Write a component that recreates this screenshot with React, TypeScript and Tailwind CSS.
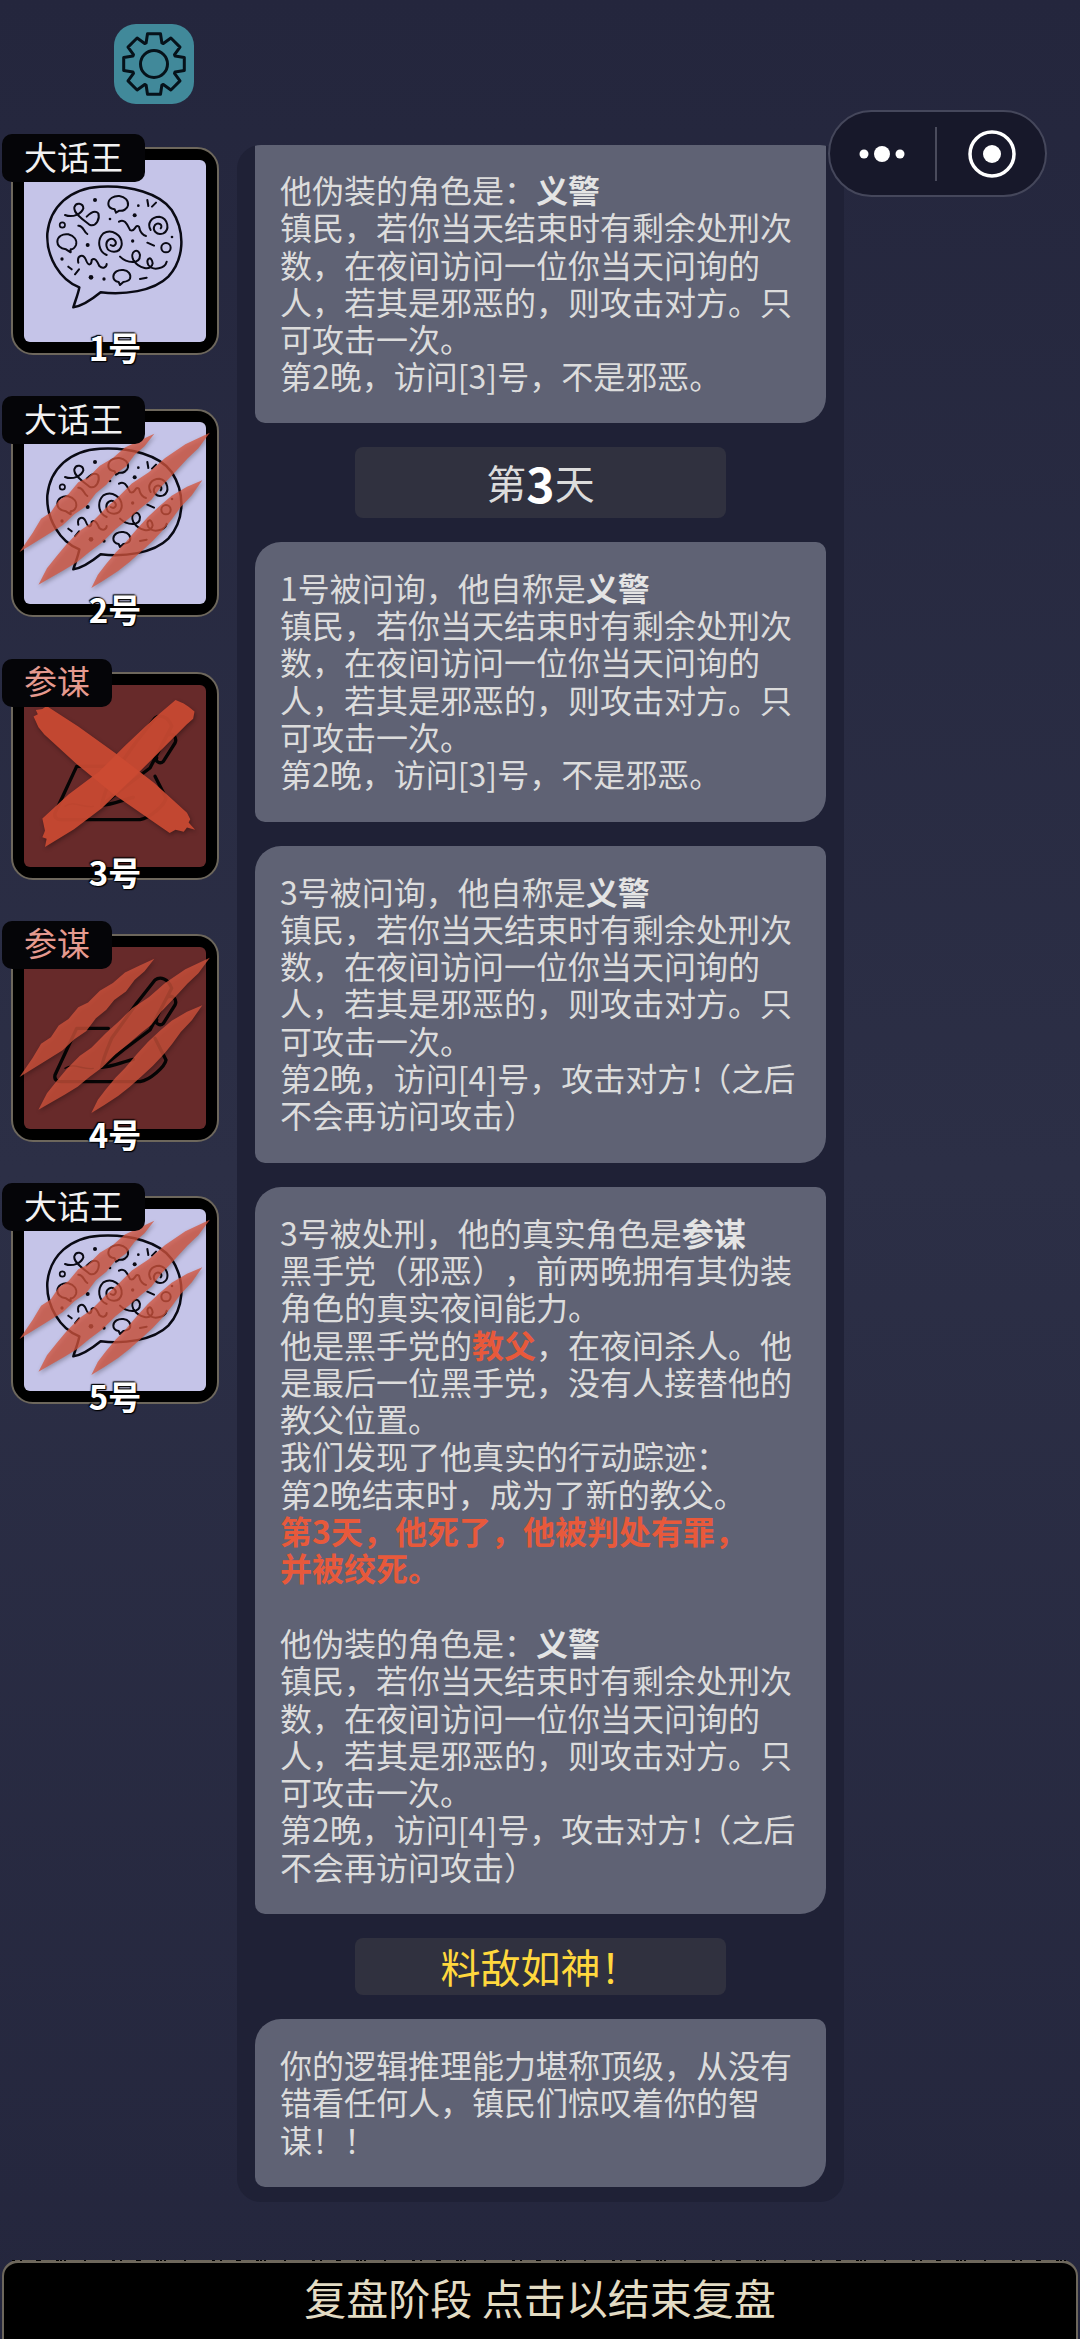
import React from 'react';

const FONT = 'font-["Noto_Sans_CJK_SC","Noto_Sans",sans-serif]';

const gearPath = () => {
  const cx = 40;
  const cy = 40;
  let d = '';
  for (let i = 0; i < 8; i++) {
    const a = (i * Math.PI) / 4 - Math.PI / 2;
    const pts = [
      [a - 0.36, 22.5],
      [a - 0.21, 31],
      [a + 0.21, 31],
      [a + 0.36, 22.5],
    ];
    pts.forEach(([t, r]) => {
      d += `${d ? 'L' : 'M'}${(cx + r * Math.cos(t)).toFixed(1)} ${(cy + r * Math.sin(t)).toFixed(1)} `;
    });
  }
  return d + 'Z';
};

// worn top edge of the bottom bar
const wornEdge = () => {
  let d = '';
  let seed = 7;
  for (let x = 4; x < 1072; x += 4) {
    seed = (seed * 31 + 11) % 101;
    if (seed % 3 === 0) d += `M${x} 0 h${2 + (seed % 4)} v${1 + (seed % 3)} h-${2 + (seed % 4)} Z `;
  }
  return d;
};

const BubbleIcon = () => (
  <svg viewBox="-48 -60 546 546" className="w-full h-full" fill="none" stroke="#0a0a14" strokeWidth="7.5" strokeLinecap="round" strokeLinejoin="round">
    <path d="M100 382 C130 378 160 355 182 337 C250 345 340 335 385 290 C430 240 440 160 395 90 C360 40 270 15 180 20 C90 25 30 80 22 160 C18 230 60 300 118 322 C115 340 105 365 100 382 Z" />
    <path d="M205 72 C205 55 222 47 238 48 C255 50 266 62 264 76 C262 88 248 94 238 92 L228 98 L224 88 C212 86 205 82 205 72Z" strokeWidth="6" />
    <path d="M52 185 C52 170 68 160 85 163 C102 168 112 180 108 195 C104 205 98 208 92 208 L92 217 L78 208 C62 205 52 198 52 185Z" strokeWidth="6" />
    <path d="M220 290 C220 276 235 268 250 270 C265 272 274 283 270 296 C266 304 258 305 250 306 L240 315 L236 306 C226 304 220 300 220 290Z" strokeWidth="6" />
    <circle cx="67" cy="135" r="8" strokeWidth="5" />
    <circle cx="378" cy="203" r="14" strokeWidth="6" />
    <g fill="#0a0a14" stroke="none">
      <circle cx="165" cy="60" r="6" />
      <circle cx="295" cy="77" r="4" />
      <circle cx="210" cy="117" r="4" />
      <circle cx="284" cy="106" r="6" />
      <circle cx="143" cy="195" r="6" />
      <circle cx="278" cy="183" r="5" />
      <circle cx="396" cy="171" r="4" />
      <circle cx="66" cy="237" r="5" />
      <circle cx="153" cy="292" r="7" />
      <circle cx="192" cy="297" r="5" />
    </g>
    <g strokeWidth="6">
      <path d="M322 60 L325 78 M336 80 L348 68 M85 260 L95 268 M105 283 L117 268 M322 188 L342 197 M300 297 L320 293" />
      <path d="M75 105 C100 115 125 100 130 85 C130 70 108 65 103 82 C100 100 130 120 150 135 C170 140 180 115 175 100 C165 90 150 100 140 110" />
      <path d="M115 137 C130 135 130 155 142 162" />
      <path d="M237 125 C255 115 262 135 270 150 C285 160 285 130 297 140 C300 155 305 165 318 168" />
      <path d="M332 150 C320 130 335 110 358 110 C385 115 390 150 370 160 C350 168 335 150 345 135 C355 125 370 135 362 145" />
      <path d="M200 225 C175 215 170 180 190 160 C215 145 248 165 245 195 C240 222 205 220 200 200 C195 180 215 170 225 182 C232 192 222 202 212 195" />
      <path d="M115 248 C110 225 130 220 138 240 C145 260 155 255 155 240 C165 230 172 245 178 258 C188 268 200 262 200 252" />
      <path d="M240 230 C260 250 300 255 300 225 C295 200 268 215 280 240 C295 265 335 275 338 250 C335 225 315 235 325 255 C340 275 375 265 380 245" />
    </g>
  </svg>
);

const PenIcon = () => (
  <svg viewBox="-48 -39 546 546" className="w-full h-full" fill="none" stroke="#050505" strokeWidth="10" strokeLinecap="round" strokeLinejoin="round">
    <path d="M205 205 L110 205 L45 345 C42 358 50 365 62 365 L300 365 C330 360 375 320 378 300 L345 235" />
    <path d="M290 130 L345 60 C360 48 385 55 395 85 L330 210 L250 270 L185 322 C190 290 205 260 215 235 L290 130" />
    <path d="M385 110 C400 105 412 120 405 135 L370 190 C360 200 345 190 350 180" />
    <path d="M185 322 C215 320 250 305 280 298" />
    <path d="M75 325 C100 305 130 332 160 325" strokeWidth="4" />
  </svg>
);

const Scratches = () => (
  <svg viewBox="32 88 625 625" className="absolute inset-0 w-full h-full drop-shadow-[1px_2px_2px_rgba(0,0,0,0.35)]" fill="#d4543c" fillOpacity="0.76">
    <path d="M52 520 L92 462 L118 418 L148 398 L172 362 L202 342 L232 306 L262 292 L298 256 L338 232 L375 200 L420 178 L465 158 L435 196 L405 222 L378 258 L342 284 L318 314 L286 340 L256 380 L220 404 L184 438 L130 472 Z" />
    <path d="M110 620 L136 570 L166 532 L196 496 L236 456 L272 430 L316 386 L356 350 L396 310 L448 276 L498 232 L560 190 L635 155 L600 202 L566 234 L526 278 L486 320 L456 360 L426 384 L386 418 L346 450 L306 490 L266 520 L230 550 L190 574 Z" />
    <path d="M272 630 L292 590 L316 558 L346 522 L376 492 L411 450 L446 412 L482 378 L518 348 L565 320 L612 300 L580 346 L546 382 L520 418 L496 448 L460 486 L426 518 L390 550 L354 578 L312 606 Z" />
  </svg>
);

const Cross = () => (
  <svg viewBox="32 65 625 625" className="absolute inset-0 w-full h-full drop-shadow-[1px_2px_2px_rgba(0,0,0,0.35)]" fill="#cb4a33" fillOpacity="0.93">
    <path d="M95 195 L108 188 L102 175 L122 172 L135 163 L232 226 L344 306 L464 398 L565 490 L575 510 L570 520 L590 542 L565 535 L555 548 L530 542 L512 552 L442 504 L336 430 L226 340 L128 250 L110 228 Z" />
    <path d="M122 508 L202 434 L296 364 L376 284 L466 199 L530 145 L555 155 L570 165 L588 180 L584 202 L564 220 L474 310 L394 390 L304 476 L219 541 L130 595 L135 570 L122 565 L130 545 Z" />
  </svg>
);

const players = [
  { no: '1号', role: '大话王', evil: false, mark: '' },
  { no: '2号', role: '大话王', evil: false, mark: 'scratch' },
  { no: '3号', role: '参谋', evil: true, mark: 'cross' },
  { no: '4号', role: '参谋', evil: true, mark: 'scratch' },
  { no: '5号', role: '大话王', evil: false, mark: 'scratch' },
];

const PlayerCard = ({ player }: { player: (typeof players)[number] }) => (
  <div className="relative w-[208px] h-[208px] rounded-[22px] border-2 border-[#6d675c] bg-black p-[11px]">
    <div className={`w-full h-full rounded-[6px] ${player.evil ? 'bg-[#672a2a]' : 'bg-[#c5c4e8]'}`}>
      {player.evil ? <PenIcon /> : <BubbleIcon />}
    </div>
    {player.mark === 'scratch' && <Scratches />}
    {player.mark === 'cross' && <Cross />}
    <div className={`absolute left-[-11px] top-[-15px] h-[48px] pb-[4px] px-[22px] rounded-[10px] bg-[#050508] flex items-center text-[33px] leading-none ${player.evil ? 'text-[#e59a8f]' : 'text-[#f2f2f2]'}`}>
      {player.role}
    </div>
    <div className="absolute left-0 right-0 top-[179px] text-center text-[33px] leading-[38px] font-bold text-white [text-shadow:0_0_2px_#000,0_0_2px_#000,1px_1px_1px_#000,-1px_-1px_1px_#000]">
      {player.no}
    </div>
  </div>
);

const Bold = ({ children }: { children: React.ReactNode }) => <span className="font-bold text-[#e4e4e4]">{children}</span>;
const Red = ({ children }: { children: React.ReactNode }) => <span className="font-bold text-[#e8593b]">{children}</span>;

const Bubble = ({ first, children }: { first?: boolean; children: React.ReactNode }) => (
  <div className={`bg-[#5f6274] px-[25px] text-[32px] leading-[37.3px] text-[#dcdcdc] [text-spacing-trim:space-all] rounded-bl-[10px] rounded-br-[26px] ${first ? 'pt-[26px] pb-[28px]' : 'pt-[27px] pb-[29px] rounded-tl-[26px] rounded-tr-[10px]'}`}>
    {children}
  </div>
);

const ABILITY = '镇民，若你当天结束时有剩余处刑次数，在夜间访问一位你当天问询的人，若其是邪恶的，则攻击对方。只可攻击一次。';

const Visit4 = () => (
  <>
    <span className="whitespace-nowrap">
      第2晚，访问[4]号，攻击对方！<span className="-ml-[22px]">（</span>之后
    </span>
    <br />
    不会再访问攻击）
  </>
);

export default function App() {
  return (
    <div className={`relative w-[1080px] h-[2339px] overflow-hidden bg-linear-to-b from-[#24263d] via-[#2c2f46] to-[#24263d] flex flex-col ${FONT}`}>
      <div className="h-[145px] pl-[114px] pt-[24px] shrink-0">
        <div className="w-[80px] h-[80px] rounded-[22px] bg-[#41899a]">
          <svg viewBox="0 0 80 80" className="w-full h-full" fill="none" stroke="#06121a" strokeWidth="3" strokeLinejoin="round">
            <path d={gearPath()} />
            <circle cx="40" cy="40" r="13.5" />
          </svg>
        </div>
      </div>

      <div className="flex items-start flex-1 min-h-0">
        <div className="w-[237px] shrink-0 pl-[11px] pt-[2px] flex flex-col gap-[54.25px]">
          {players.map((p) => (
            <PlayerCard key={p.no} player={p} />
          ))}
        </div>

        <div className="w-[607px] bg-[#1f2136] rounded-[24px] px-[18px] pb-[15px] flex flex-col gap-[24px] overflow-hidden">
          <Bubble first>
            他伪装的角色是：<Bold>义警</Bold>
            <br />
            {ABILITY}
            <br />
            第2晚，访问[3]号，不是邪恶。
          </Bubble>

          <div className="h-[71px] mx-[100px] rounded-[8px] bg-[#30313f] flex items-center justify-center text-[40px] text-[#dcdcdc]">
            第<span className="font-bold text-white text-[48px] leading-none">3</span>天
          </div>

          <Bubble>
            1号被问询，他自称是<Bold>义警</Bold>
            <br />
            {ABILITY}
            <br />
            第2晚，访问[3]号，不是邪恶。
          </Bubble>

          <Bubble>
            3号被问询，他自称是<Bold>义警</Bold>
            <br />
            {ABILITY}
            <br />
            <Visit4 />
          </Bubble>

          <Bubble>
            3号被处刑，他的真实角色是<Bold>参谋</Bold>
            <br />
            黑手党（邪恶），前两晚拥有其伪装角色的真实夜间能力。
            <br />
            他是黑手党的<Red>教父</Red>，在夜间杀人。他是最后一位黑手党，没有人接替他的教父位置。
            <br />
            我们发现了他真实的行动踪迹：
            <br />
            第2晚结束时，成为了新的教父。
            <br />
            <Red>
              第3天，他死了，他被判处有罪，
              <br />
              并被绞死。
            </Red>
            <br />
            <br />
            他伪装的角色是：<Bold>义警</Bold>
            <br />
            {ABILITY}
            <br />
            <Visit4 />
          </Bubble>

          <div className="h-[57px] mx-[100px] rounded-[8px] bg-[#30313f] flex items-center justify-center text-[40px] text-[#ffd83d]">
            料敌如神！
          </div>

          <Bubble>你的逻辑推理能力堪称顶级，从没有错看任何人，镇民们惊叹着你的智谋！！</Bubble>
        </div>
      </div>

      <div className="relative h-[79px] mx-[2px] shrink-0 rounded-t-[16px] border-t-[3px] border-x-2 border-[#6d675c] bg-black flex items-start justify-center pt-[9px] text-[42px] leading-[50px] text-[#e3dcc4]">
        <svg viewBox="0 0 1072 4" className="absolute left-0 top-[-3px] w-[1072px] h-[4px]" fill="#000">
          <path d={wornEdge()} />
        </svg>
        复盘阶段 点击以结束复盘
      </div>

      <div className="absolute left-[828px] top-[110px] w-[219px] h-[87px] rounded-full border-2 border-[#45475b] bg-[#17182a]">
        <svg viewBox="0 0 215 83" className="w-full h-full" fill="#fff">
          <circle cx="34" cy="42" r="4.5" />
          <circle cx="52" cy="42" r="8" />
          <circle cx="70" cy="42" r="4.5" />
          <rect x="105" y="15" width="2" height="54" fill="#4a4b5c" />
          <circle cx="162" cy="42" r="22" fill="none" stroke="#fff" strokeWidth="3.5" />
          <circle cx="162" cy="42" r="9" />
        </svg>
      </div>
    </div>
  );
}
